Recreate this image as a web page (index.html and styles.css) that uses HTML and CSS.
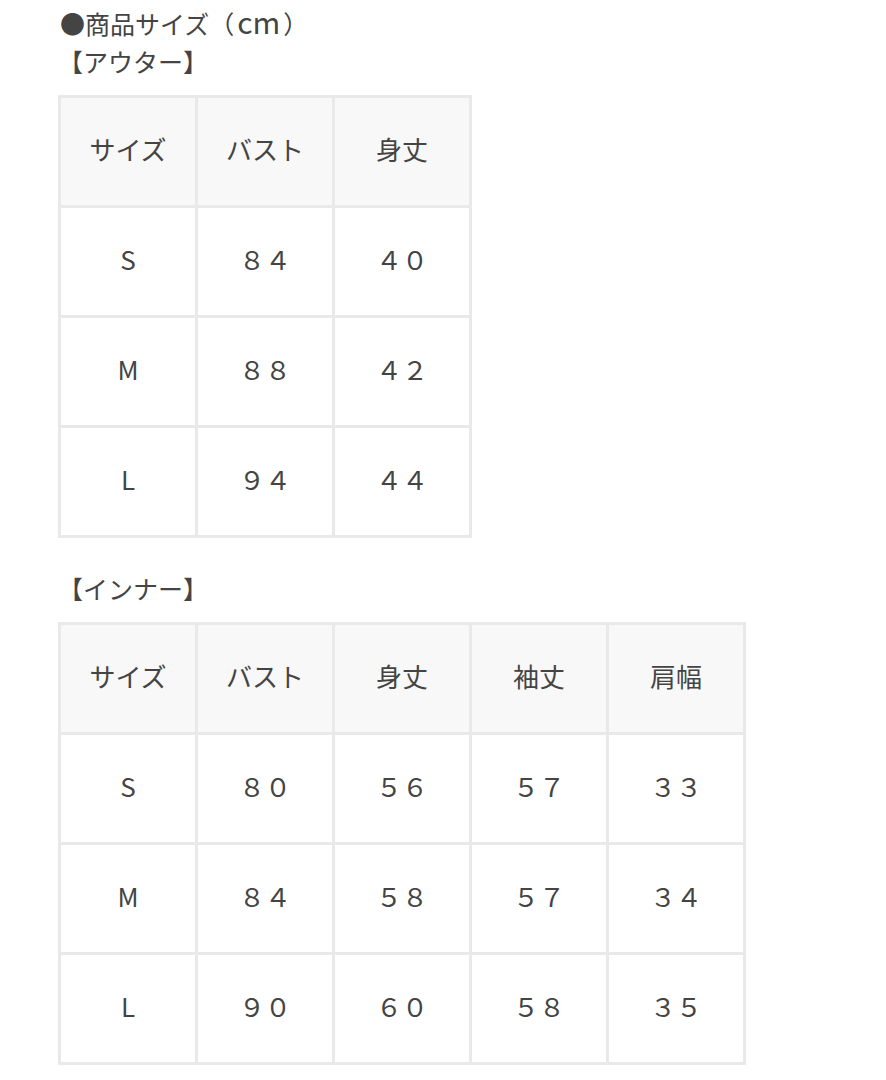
FILE: index.html
```html
<!DOCTYPE html>
<html lang="ja">
<head>
<meta charset="utf-8">
<link rel="stylesheet" href="styles.css">
</head>
<body>
<div class="page">
  <p class="title">●商品サイズ（<span class="unit">cm</span>）</p>
  <p class="label">【アウター】</p>
  <table class="size">
    <tr class="head"><td>サイズ</td><td>バスト</td><td>身丈</td></tr>
    <tr><td>S</td><td>８４</td><td>４０</td></tr>
    <tr><td>M</td><td>８８</td><td>４２</td></tr>
    <tr><td>L</td><td>９４</td><td>４４</td></tr>
  </table>
  <p class="label second">【インナー】</p>
  <table class="size">
    <tr class="head"><td>サイズ</td><td>バスト</td><td>身丈</td><td>袖丈</td><td>肩幅</td></tr>
    <tr><td>S</td><td>８０</td><td>５６</td><td>５７</td><td>３３</td></tr>
    <tr><td>M</td><td>８４</td><td>５８</td><td>５７</td><td>３４</td></tr>
    <tr><td>L</td><td>９０</td><td>６０</td><td>５８</td><td>３５</td></tr>
  </table>
</div>
</body>
</html>
```

FILE: styles.css
```css
html, body {
  margin: 0;
  padding: 0;
  background: #ffffff;
}
body {
  font-family: "Noto Sans CJK JP", "Noto Sans", sans-serif;
  color: #444444;
  font-size: 25px;
}
.page {
  padding: 1px 0 0 58px;
}
.title,
.label {
  margin: 0;
  line-height: 40px;
  height: 40px;
}
.title {
  padding-left: 2px;
}
.unit {
  font-size: 30px;
  padding: 0 3px;
}
.label.second {
  margin-top: 30px;
}
.size {
  border-collapse: collapse;
  margin-top: 14px;
  table-layout: fixed;
}
.size td {
  width: 137px;
  height: 110px;
  padding: 0 0 6px 0;
  box-sizing: border-box;
  border: 3px solid #e9e9e9;
  text-align: center;
  vertical-align: middle;
  line-height: 1;
  font-size: 26px;
}
.size .head td {
  background: #f8f8f8;
}
```
